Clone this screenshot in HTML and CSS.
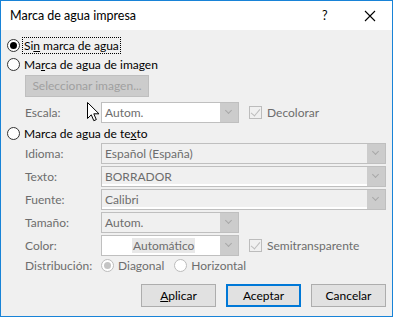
FILE: index.html
```html
<!DOCTYPE html>
<html lang="es">
<head>
<meta charset="UTF-8">
<title>Marca de agua impresa</title>
<link rel="stylesheet" href="styles.css">
</head>
<body>
<div class="window">
  <div class="titlebar">
    <span class="title">Marca de agua impresa</span>
    <span class="help">?</span>
    <svg class="close" width="12" height="12" viewBox="0 0 12 12"><path d="M1 1L11 11M11 1L1 11" stroke="#000" stroke-width="1.1" fill="none"/></svg>
  </div>
  <div class="content">
    <div class="option-row first">
      <span class="radio checked"></span>
      <span class="focus">Si<u>n</u> marca de agua</span>
    </div>
    <div class="option-row">
      <span class="radio"></span>
      <span>Ma<u>r</u>ca de agua de imagen</span>
    </div>
    <div class="indent">
      <div class="btn-disabled">Seleccionar imagen...</div>
    </div>
    <div class="field-row">
      <span class="label">Escala:</span>
      <div class="combo short white"><span class="value">Autom.</span><span class="arrow"></span></div>
      <span class="check"></span>
      <span class="dim">Decolorar</span>
    </div>
    <div class="option-row third">
      <span class="radio"></span>
      <span>Marca de agua de te<u>x</u>to</span>
    </div>
    <div class="field-row tight top">
      <span class="label">Idioma:</span>
      <div class="combo"><span class="value">Español (España)</span><span class="arrow"></span></div>
    </div>
    <div class="field-row tight">
      <span class="label">Texto:</span>
      <div class="combo edit"><span class="value">BORRADOR</span><span class="arrow"></span></div>
    </div>
    <div class="field-row tight">
      <span class="label">Fuente:</span>
      <div class="combo edit"><span class="value">Calibri</span><span class="arrow"></span></div>
    </div>
    <div class="field-row tight">
      <span class="label">Tamaño:</span>
      <div class="combo short"><span class="value">Autom.</span><span class="arrow"></span></div>
    </div>
    <div class="field-row tight">
      <span class="label">Color:</span>
      <div class="combo short white"><span class="value centered"><span class="hl">Automático</span></span><span class="arrow"></span></div>
      <span class="check"></span>
      <span class="dim">Semitransparente</span>
    </div>
    <div class="field-row dist">
      <span class="label">Distribución:</span>
      <span class="radio disabled checked"></span>
      <span class="dim gap">Diagonal</span>
      <span class="radio disabled"></span>
      <span class="dim">Horizontal</span>
    </div>
    <div class="buttons">
      <button class="btn"><u>A</u>plicar</button>
      <button class="btn default">Aceptar</button>
      <button class="btn">Cancelar</button>
    </div>
  </div>
  <svg class="cursor" width="13" height="20" viewBox="0 0 13 20"><path d="M0.5 0.5V16.5L4.3 12.8L6.8 18.7L9.3 17.6L6.8 11.8H12Z" fill="#fff" stroke="#000" stroke-width="1" stroke-linejoin="round"/></svg>
</div>
</body>
</html>
```

FILE: styles.css
```css
body { margin: 0; font-family: Lato, "Noto Sans", sans-serif; font-size: 12px; color: #000; }
.window { position: relative; width: 393px; height: 317px; box-sizing: border-box; border: 1px solid #1883d7; background: #f0f0f0; }
.titlebar { height: 29px; background: #fff; display: flex; align-items: center; padding-left: 9px; }
.title { flex-grow: 1; font-size: 12.5px; }
.help { width: 14px; margin-right: 28px; font-size: 12.5px; }
.close { margin-right: 16px; }
.content { padding-left: 6px; padding-right: 6px; }
.option-row { display: flex; align-items: center; height: 19px; }
.option-row.first { margin-top: 6px; }
.option-row.third { height: 20px; }
.radio { width: 11px; height: 11px; border: 1px solid #333; border-radius: 50%; background: #fff; margin-right: 4px; position: relative; flex-shrink: 0; }
.radio.checked::after { content: ""; position: absolute; left: 2px; top: 2px; width: 7px; height: 7px; border-radius: 50%; background: #000; }
.radio.disabled { border-color: #bcbcbc; }
.radio.disabled.checked::after { background: #c4c4c4; }
.focus { outline: 1px dotted #000; outline-offset: 0; padding: 0 1px; margin-left: -1px; }
.indent { padding-left: 18px; margin-top: 1px; }
.btn-disabled { width: 122px; height: 20px; border: 1px solid #bfbfbf; background: #cccccc; color: #a0a0a0; line-height: 20px; text-align: center; }
.field-row { display: flex; align-items: center; height: 21px; margin-top: 5px; padding-left: 18px; }
.field-row.tight { margin-top: 2px; }
.field-row.top { margin-top: 0; }
.label { width: 76px; color: #6d6d6d; flex-shrink: 0; }
.combo { flex-grow: 1; height: 19px; border: 1px solid #bfbfbf; background: #f0f0f0; display: flex; color: #6d6d6d; }
.combo.short { flex-grow: 0; width: 136px; }
.combo.white { background: #fff; }
.combo.edit { box-shadow: inset 0 -2px 0 #fff; }
.value { flex-grow: 1; padding-left: 3px; line-height: 19px; }
.value.centered { padding-left: 30px; }
.hl { background: #e8e8e8; padding: 0 1px; }
.arrow { width: 18px; background: #cccccc; position: relative; }
.arrow::after { content: ""; position: absolute; left: 6px; top: 5px; width: 4px; height: 4px; border-right: 1px solid #a8a8a8; border-bottom: 1px solid #a8a8a8; transform: rotate(45deg); }
.check { width: 11px; height: 11px; border: 1px solid #bcbcbc; background: #f0f0f0; margin-left: 10px; margin-right: 5px; position: relative; }
.check::after { content: ""; position: absolute; left: 3px; top: 0px; width: 4px; height: 8px; border-right: 1px solid #bcbcbc; border-bottom: 1px solid #bcbcbc; transform: rotate(40deg); }
.dim { color: #6d6d6d; }
.dim.gap { margin-right: 10px; }
.field-row.dist { margin-top: 0; height: 18px; }
.buttons { display: flex; justify-content: flex-end; gap: 10px; margin-top: 10px; }
.btn { width: 75px; height: 23px; border: 1px solid #adadad; background: #e1e1e1; font-family: inherit; font-size: 12px; padding: 0; color: #000; }
.btn.default { border: 2px solid #0078d7; }
.cursor { position: absolute; left: 86px; top: 101px; }
```
